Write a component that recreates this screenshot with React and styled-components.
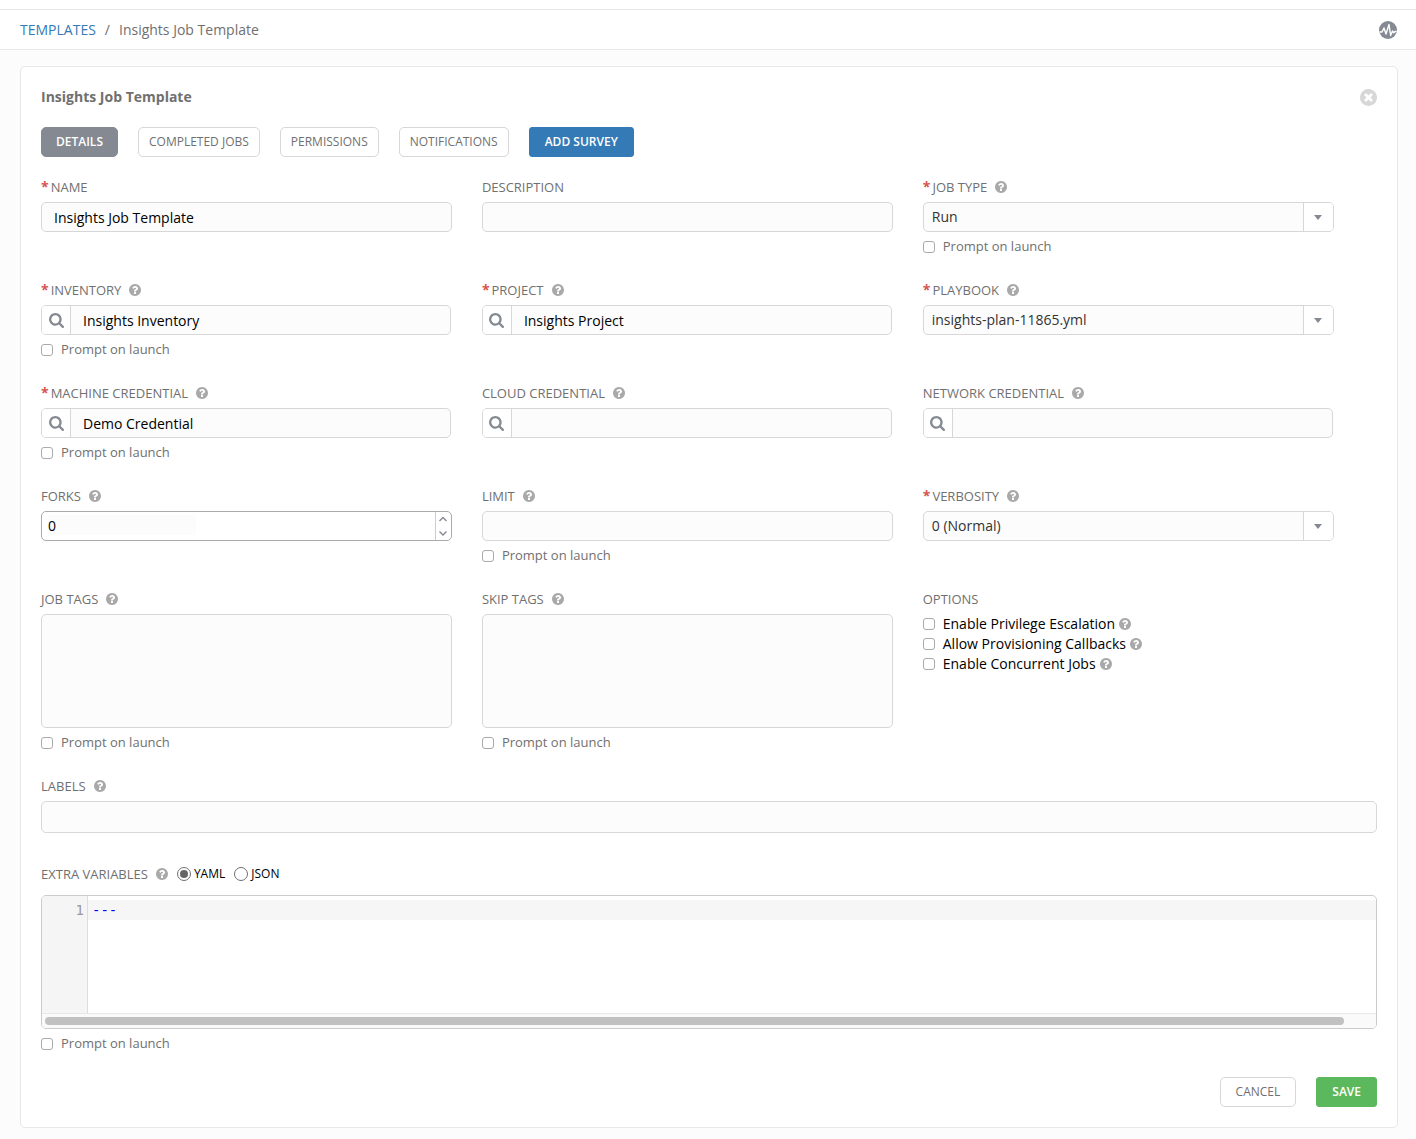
import React, { useState } from "react";
import styled, { createGlobalStyle, css } from "styled-components";

const GlobalStyle = createGlobalStyle`
  *, *::before, *::after {
    box-sizing: border-box;
  }
  body {
    margin: 0;
    background: #fcfcfc;
    color: #707070;
    font-family: "Open Sans", "Noto Sans", sans-serif;
    font-size: 14px;
    line-height: 20px;
  }
  button, input, select, textarea {
    margin: 0;
    font-family: inherit;
    font-size: inherit;
  }
`;

const TopStrip = styled.div`
  height: 10px;
  background: #fff;
  border-bottom: 1px solid #e8e8e8;
`;
const BreadCrumb = styled.header`
  display: flex;
  align-items: center;
  justify-content: space-between;
  height: 40px;
  padding: 0 19px 0 20px;
  background: #fff;
  border-bottom: 1px solid #e8e8e8;
`;
const Crumbs = styled.nav`
  display: flex;
  gap: 9px;
`;
const CrumbLink = styled.a`
  color: #337ab7;
  text-decoration: none;
`;
const IconButton = styled.button`
  display: flex;
  padding: 0;
  border: 0;
  background: none;
  color: ${({ $color }) => $color};
  cursor: pointer;
`;
const Icon = styled.svg`
  display: block;
  flex: none;
  width: ${({ $size }) => $size}px;
  height: ${({ $size }) => $size}px;
  fill: currentColor;
`;

const Panel = styled.main`
  margin: 16px 18px 11px 20px;
  padding: 20px;
  background: #fff;
  border: 1px solid #e8e8e8;
  border-radius: 5px;
`;
const PanelHeader = styled.div`
  display: flex;
  align-items: center;
  justify-content: space-between;
`;
const PanelTitle = styled.h1`
  margin: 0;
  font-size: 14px;
  font-weight: 700;
  line-height: 20px;
`;
const Tabs = styled.div`
  display: flex;
  gap: 20px;
  margin: 20px 0;
`;
const solid = (color) => css`
  background: ${color};
  border-color: ${color};
  color: #fff;
  font-weight: 600;
`;
const Button = styled.button`
  height: 30px;
  padding: 0 ${({ $wide }) => ($wide ? 15 : 10)}px;
  background: #fff;
  border: 1px solid #d7d7d7;
  border-radius: 5px;
  color: #707070;
  font-size: 12px;
  line-height: 20px;
  cursor: pointer;
  ${({ $active }) => $active && solid("#848992")}
  ${({ $active }) => $active && "padding: 0 14px;"}
  ${({ $color }) => $color && solid($color)}
  ${({ $color }) => $color && "border-radius: 3px;"}
`;

const Form = styled.form`
  display: grid;
  grid-template-columns: repeat(3, 33%);
  row-gap: 23px;
`;
const FieldGroup = styled.div`
  display: flex;
  flex-direction: column;
  gap: 5px;
  min-height: 80px;
  min-width: 0;
  padding-right: ${({ $lookup }) => ($lookup ? 31 : 30)}px;
`;
const WideGroup = styled.div`
  grid-column: 1 / -1;
  display: flex;
  flex-direction: column;
  gap: 5px;
  width: calc(100% + 100% / 99);
  margin-bottom: ${({ $space }) => $space || 0}px;
`;
const LabelRow = styled.div`
  display: flex;
  align-items: center;
  height: 20px;
  font-size: 13px;
`;
const Required = styled.span`
  margin-right: 2px;
  color: #d9534f;
  font-size: 14px;
  font-weight: 700;
`;
const Help = styled.button`
  display: flex;
  margin-left: ${({ $near }) => ($near ? 4 : 8)}px;
  padding: 0;
  border: 0;
  background: none;
  color: #a9a9a9;
  cursor: pointer;
`;

const fieldBox = css`
  height: 30px;
  background: #fcfcfc;
  border: 1px solid #d7d7d7;
  border-radius: 5px;
`;
const TextInput = styled.input`
  ${fieldBox}
  width: 100%;
  height: ${({ $tall }) => ($tall ? 32 : 30)}px;
  padding: 0 12px;
  color: #000;
`;
const TagArea = styled.textarea`
  ${fieldBox}
  display: block;
  width: 100%;
  height: 114px;
  padding: 5px 12px;
  resize: none;
`;
const Group = styled.div`
  ${fieldBox}
  display: flex;
  overflow: hidden;
`;
const LookupButton = styled.button`
  display: flex;
  flex: none;
  align-items: center;
  justify-content: center;
  width: 29px;
  padding: 0;
  border: 0;
  border-right: 1px solid #d7d7d7;
  background: #fff;
  color: #848992;
  cursor: pointer;
`;
const InnerInput = styled.input`
  flex: 1;
  min-width: 0;
  padding: 0 12px;
  border: 0;
  background: transparent;
  color: #000;
`;
const Select = styled.select`
  flex: 1;
  min-width: 0;
  padding: 0 8px 2px;
  border: 0;
  background: transparent;
  color: #333;
  appearance: none;
`;
const ArrowCell = styled.span`
  display: flex;
  flex: none;
  align-items: center;
  justify-content: center;
  width: 30px;
  background: #fff;
  border-left: 1px solid #d7d7d7;

  &::after {
    content: "";
    border: 4px solid transparent;
    border-top: 5px solid #848992;
    border-bottom: 0;
  }
`;
const Spinner = styled(Group)`
  align-items: flex-start;
  padding-left: 6px;
  background: #fff;
  border-color: #aaa;
`;
const SpinnerInput = styled.input`
  width: 148px;
  height: 20px;
  margin-top: 3px;
  padding: 0;
  border: 0;
  background: #fcfcfc;
  color: #000;
  appearance: textfield;

  &::-webkit-inner-spin-button {
    appearance: none;
  }
`;
const SpinnerButtons = styled.span`
  display: flex;
  flex-direction: column;
  align-self: stretch;
  width: 16px;
  margin-left: auto;
  border-left: 1px solid #ccc;
`;
const SpinnerButton = styled.button`
  display: flex;
  flex: 1;
  align-items: center;
  justify-content: center;
  padding: 0;
  border: 0;
  background: none;
  color: #848992;
`;

const CheckLabel = styled.label`
  display: flex;
  align-items: center;
  height: 20px;
  gap: 8px;
  color: ${({ $dark }) => ($dark ? "#000" : "#707070")};
  font-size: ${({ $dark }) => ($dark ? 14 : 13)}px;
`;
const PromptText = styled.span`
  padding-bottom: 2px;
`;
const CheckBox = styled.input`
  flex: none;
  width: 12px;
  height: 12px;
  background: #fff;
  border: 1px solid #aaa;
  border-radius: 3px;
  appearance: none;

  &:checked {
    background: #848992;
  }
`;
const Options = styled.div`
  display: flex;
  flex-direction: column;
`;
const OptionRow = styled.div`
  display: flex;
  align-items: center;
`;
const RadioLabel = styled.label`
  display: flex;
  align-items: center;
  gap: 3px;
  margin-left: 9px;
  color: #000;
  font-size: 12px;
`;
const Radio = styled.input`
  width: 14px;
  height: 14px;
  border: 1px solid #707070;
  border-radius: 50%;
  background: #fff;
  appearance: none;

  &:checked {
    padding: 2px;
    background: #666 content-box;
  }
`;

const Editor = styled.div`
  display: flex;
  flex-direction: column;
  height: 134px;
  margin-top: 6px;
  border: 1px solid #ccc;
  border-radius: 5px;
  overflow: hidden;
  font-family: "DejaVu Sans Mono", monospace;
`;
const EditorBody = styled.div`
  display: flex;
  flex: 1;
  min-height: 0;
`;
const Gutter = styled.div`
  width: 46px;
  padding: 4px 3px 0 0;
  background: #f5f5f5;
  border-right: 1px solid #ddd;
  color: #999;
  text-align: right;
`;
const Code = styled.textarea`
  flex: 1;
  min-width: 0;
  padding: 4px;
  border: 0;
  outline: 0;
  resize: none;
  background: linear-gradient(#f6f6f6, #f6f6f6) 0 4px / 100% 20px no-repeat;
  color: #00f;
  line-height: 20px;
`;
const ScrollTrack = styled.div`
  height: 15px;
  padding: 3px 32px 3px 3px;
  background: #fafafa;
  border-top: 1px solid #e8e8e8;
`;
const ScrollThumb = styled.div`
  height: 8px;
  background: #c1c1c1;
  border-radius: 4px;
`;
const Actions = styled.div`
  display: flex;
  justify-content: flex-end;
  gap: 20px;
  margin-top: 23px;
`;

const disc =
  "q0 209-103 385.5t-279.5 279.5-385.5 103-385.5-103-279.5-279.5-103-385.5 103-385.5 279.5-279.5 385.5-103 385.5 103 279.5 279.5 103 385.5z";

const QuestionIcon = () => (
  <Icon $size={12} viewBox="128 128 1536 1536">
    <path
      d={`M1024 1376v-192q0-14-9-23t-23-9h-192q-14 0-23 9t-9 23v192q0 14 9 23t23 9h192q14 0 23-9t9-23zm256-672q0-88-55.5-163t-138.5-116-170-41q-243 0-371 213-15 24 8 42l132 100q7 6 19 6 16 0 25-12 53-68 86-92 34-24 86-24 48 0 85.5 26t37.5 59q0 38-20 61t-68 45q-63 28-115.5 86.5t-52.5 125.5v36q0 14 9 23t23 9h192q14 0 23-9t9-23q0-19 21.5-49.5t54.5-49.5q32-18 49-28.5t46-35 44.5-48 28-60.5 12.5-81zm384 192${disc}`}
    />
  </Icon>
);
const CloseIcon = () => (
  <Icon $size={17} viewBox="128 128 1536 1536">
    <path
      d={`M1277 1122q0-26-19-45l-181-181 181-181q19-19 19-45 0-27-19-46l-90-90q-19-19-46-19-26 0-45 19l-181 181-181-181q-19-19-45-19-27 0-46 19l-90 90q-19 19-19 46 0 26 19 45l181 181-181 181q-19 19-19 45 0 27 19 46l90 90q19 19 46 19 26 0 45-19l181-181 181 181q19 19 45 19 27 0 46-19l90-90q19-19 19-46zm387-226${disc}`}
    />
  </Icon>
);
const SearchIcon = () => (
  <Icon $size={15} viewBox="64 128 1664 1664">
    <path d="M1216 832q0-185-131.5-316.5t-316.5-131.5-316.5 131.5-131.5 316.5 131.5 316.5 316.5 131.5 316.5-131.5 131.5-316.5zm512 832q0 52-38 90t-90 38q-54 0-90-38l-343-342q-179 124-399 124-143 0-273.5-55.5t-225-150-150-225-55.5-273.5 55.5-273.5 150-225 225-150 273.5-55.5 273.5 55.5 225 150 150 225 55.5 273.5q0 220-124 399l343 343q37 37 37 90z" />
  </Icon>
);
const ActivityIcon = () => (
  <Icon $size={18} viewBox="0 0 18 18">
    <circle cx="9" cy="9" r="9" />
    <path
      d="M0.5 11H3L5 7L7 13L10 3.5L11.6 14.5L13.5 10L14.8 11.8L16 10.5H17.5"
      fill="none"
      stroke="#fff"
      strokeWidth="1.4"
      strokeLinejoin="round"
    />
  </Icon>
);
const Chevron = ({ d }) => (
  <Icon $size={8} viewBox="0 0 8 8">
    <path d={d} fill="none" stroke="currentColor" strokeWidth="1.4" />
  </Icon>
);

const HelpButton = ({ about, near }) => (
  <Help type="button" aria-label={`Help: ${about}`} $near={near}>
    <QuestionIcon />
  </Help>
);

const Prompt = () => (
  <CheckLabel>
    <CheckBox type="checkbox" />
    <PromptText>Prompt on launch</PromptText>
  </CheckLabel>
);

const FieldLabel = ({ id, text, required, help }) => (
  <LabelRow>
    {required && <Required>*</Required>}
    <label htmlFor={id}>{text}</label>
    {help && <HelpButton about={text} />}
  </LabelRow>
);

const Field = ({ id, label, required, help, prompt, lookup, children }) => (
  <FieldGroup $lookup={lookup}>
    <FieldLabel id={id} text={label} required={required} help={help} />
    {children}
    {prompt && <Prompt />}
  </FieldGroup>
);

const LookupField = ({ value = "", ...props }) => (
  <Field {...props} help lookup>
    <Group>
      <LookupButton type="button" aria-label={`Search ${props.label}`}>
        <SearchIcon />
      </LookupButton>
      <InnerInput id={props.id} defaultValue={value} />
    </Group>
  </Field>
);

const SelectField = ({ value, ...props }) => (
  <Field {...props} required help>
    <Group>
      <Select id={props.id} defaultValue={value}>
        <option>{value}</option>
      </Select>
      <ArrowCell />
    </Group>
  </Field>
);

const App = () => {
  const [forks, setForks] = useState(0);
  const [format, setFormat] = useState("YAML");
  return (
    <>
      <GlobalStyle />
      <TopStrip />
      <BreadCrumb>
        <Crumbs>
          <CrumbLink href="#templates">TEMPLATES</CrumbLink>
          <span>/</span>
          <span>Insights Job Template</span>
        </Crumbs>
        <IconButton $color="#848992" aria-label="Activity stream">
          <ActivityIcon />
        </IconButton>
      </BreadCrumb>
      <Panel>
        <PanelHeader>
          <PanelTitle>Insights Job Template</PanelTitle>
          <IconButton $color="#d7d7d7" aria-label="Close">
            <CloseIcon />
          </IconButton>
        </PanelHeader>
        <Tabs>
          <Button $active>DETAILS</Button>
          <Button>COMPLETED JOBS</Button>
          <Button>PERMISSIONS</Button>
          <Button>NOTIFICATIONS</Button>
          <Button $wide $color="#337ab7">
            ADD SURVEY
          </Button>
        </Tabs>
        <Form id="job-template" onSubmit={(e) => e.preventDefault()}>
          <Field id="name" label="NAME" required>
            <TextInput id="name" defaultValue="Insights Job Template" />
          </Field>
          <Field id="description" label="DESCRIPTION">
            <TextInput id="description" />
          </Field>
          <SelectField id="job-type" label="JOB TYPE" value="Run" prompt />

          <LookupField
            id="inventory"
            label="INVENTORY"
            value="Insights Inventory"
            required
            prompt
          />
          <LookupField
            id="project"
            label="PROJECT"
            value="Insights Project"
            required
          />
          <SelectField
            id="playbook"
            label="PLAYBOOK"
            value="insights-plan-11865.yml"
          />

          <LookupField
            id="machine"
            label="MACHINE CREDENTIAL"
            value="Demo Credential"
            required
            prompt
          />
          <LookupField id="cloud" label="CLOUD CREDENTIAL" />
          <LookupField id="network" label="NETWORK CREDENTIAL" />

          <Field id="forks" label="FORKS" help>
            <Spinner>
              <SpinnerInput
                id="forks"
                type="number"
                min="0"
                value={forks}
                onChange={(e) => setForks(Number(e.target.value))}
              />
              <SpinnerButtons>
                <SpinnerButton
                  type="button"
                  aria-label="Increase forks"
                  onClick={() => setForks(forks + 1)}
                >
                  <Chevron d="M0.5 6L4 2.5L7.5 6" />
                </SpinnerButton>
                <SpinnerButton
                  type="button"
                  aria-label="Decrease forks"
                  onClick={() => setForks(Math.max(0, forks - 1))}
                >
                  <Chevron d="M0.5 2.5L4 6L7.5 2.5" />
                </SpinnerButton>
              </SpinnerButtons>
            </Spinner>
          </Field>
          <Field id="limit" label="LIMIT" help prompt>
            <TextInput id="limit" />
          </Field>
          <SelectField id="verbosity" label="VERBOSITY" value="0 (Normal)" />

          <Field id="job-tags" label="JOB TAGS" help prompt>
            <TagArea id="job-tags" />
          </Field>
          <Field id="skip-tags" label="SKIP TAGS" help prompt>
            <TagArea id="skip-tags" />
          </Field>
          <FieldGroup>
            <LabelRow>OPTIONS</LabelRow>
            <Options>
              {[
                "Enable Privilege Escalation",
                "Allow Provisioning Callbacks",
                "Enable Concurrent Jobs",
              ].map((option) => (
                <OptionRow key={option}>
                  <CheckLabel $dark>
                    <CheckBox type="checkbox" />
                    {option}
                  </CheckLabel>
                  <HelpButton about={option} near />
                </OptionRow>
              ))}
            </Options>
          </FieldGroup>

          <WideGroup $space={8}>
            <FieldLabel id="labels" text="LABELS" help />
            <TextInput id="labels" $tall />
          </WideGroup>

          <WideGroup>
            <LabelRow>
              <label htmlFor="variables">EXTRA VARIABLES</label>
              <HelpButton about="EXTRA VARIABLES" />
              {["YAML", "JSON"].map((name) => (
                <RadioLabel key={name}>
                  <Radio
                    type="radio"
                    name="format"
                    checked={format === name}
                    onChange={() => setFormat(name)}
                  />
                  {name}
                </RadioLabel>
              ))}
            </LabelRow>
            <Editor>
              <EditorBody>
                <Gutter>1</Gutter>
                <Code id="variables" defaultValue="---" spellCheck={false} />
              </EditorBody>
              <ScrollTrack>
                <ScrollThumb />
              </ScrollTrack>
            </Editor>
            <Prompt />
          </WideGroup>
        </Form>
        <Actions>
          <Button $wide>CANCEL</Button>
          <Button $wide $color="#5cb85c" type="submit" form="job-template">
            SAVE
          </Button>
        </Actions>
      </Panel>
    </>
  );
};
export default App;
